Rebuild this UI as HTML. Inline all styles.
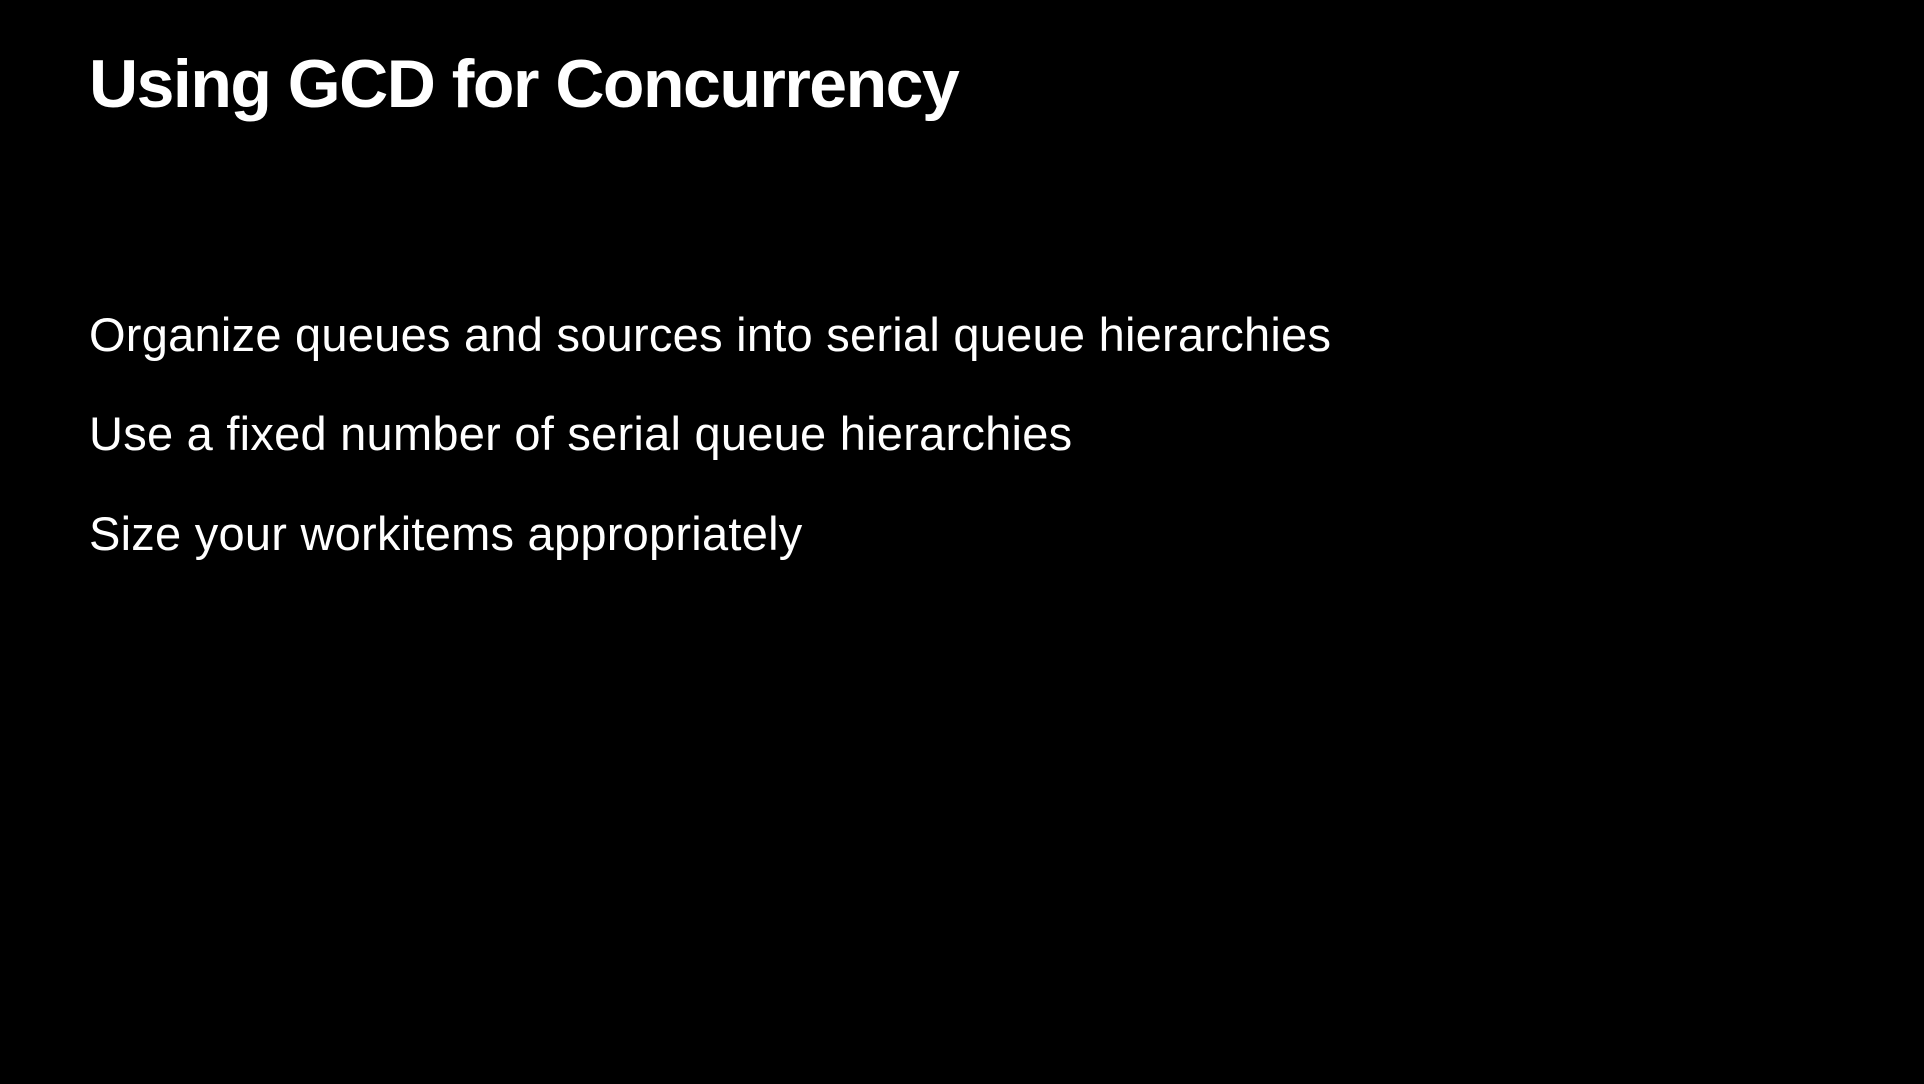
<!DOCTYPE html>
<html><head><meta charset="utf-8"><style>
html,body{margin:0;padding:0;background:#000;}
body{width:1924px;height:1084px;position:relative;overflow:hidden;font-family:"Liberation Sans",sans-serif;color:#fff;}
.t{position:absolute;left:89px;top:44px;font-size:68px;font-weight:bold;line-height:80px;white-space:nowrap;letter-spacing:-1.5px;}
.b{position:absolute;left:89px;font-size:47px;line-height:56px;white-space:nowrap;letter-spacing:0.25px;}
</style></head><body>
<div class="t">Using GCD for Concurrency</div>
<div class="b" style="top:307px">Organize queues and sources into serial queue hierarchies</div>
<div class="b" style="top:406px">Use a fixed number of serial queue hierarchies</div>
<div class="b" style="top:506px">Size your workitems appropriately</div>
</body></html>
